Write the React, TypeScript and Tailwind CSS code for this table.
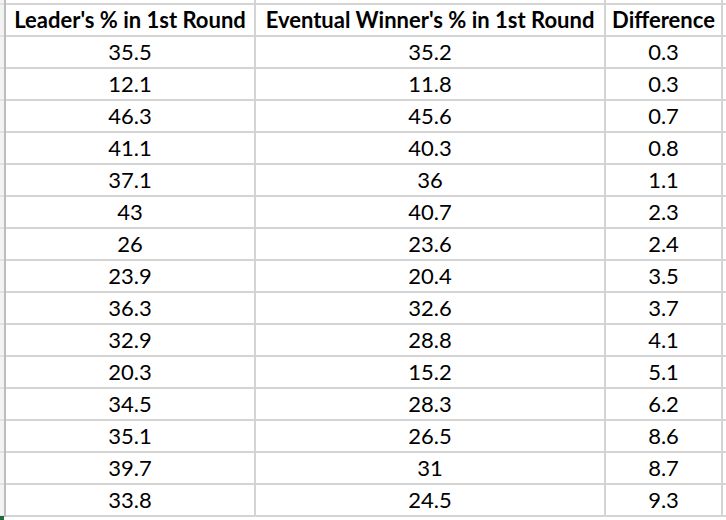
import React from "react";

const rows: [string, string, string][] = [
  ["35.5", "35.2", "0.3"],
  ["12.1", "11.8", "0.3"],
  ["46.3", "45.6", "0.7"],
  ["41.1", "40.3", "0.8"],
  ["37.1", "36", "1.1"],
  ["43", "40.7", "2.3"],
  ["26", "23.6", "2.4"],
  ["23.9", "20.4", "3.5"],
  ["36.3", "32.6", "3.7"],
  ["32.9", "28.8", "4.1"],
  ["20.3", "15.2", "5.1"],
  ["34.5", "28.3", "6.2"],
  ["35.1", "26.5", "8.6"],
  ["39.7", "31", "8.7"],
  ["33.8", "24.5", "9.3"],
];

function Row({ cells, bold, first }: { cells: string[]; bold?: boolean; first?: boolean }) {
  const h = first ? "h-[34px] border-t-2" : "h-[32px]";
  return (
    <div className="flex">
      <div className={`w-[4px] ${h} bg-[#f3f3f3] border-b-2 border-[#e2e2e2] shrink-0`} />
      <div className={`w-[2px] ${first ? "h-[34px]" : "h-[32px]"} bg-[#bdbdbd] shrink-0`} />
      {cells.map((c, i) => (
        <div
          key={i}
          className={`${h} ${i === 0 ? "w-[250px]" : i === 1 ? "w-[350px]" : "w-[117px]"} shrink-0 border-r-2 border-b-2 border-[#d4d4d4] flex items-center justify-center ${bold ? "font-bold" : ""}`}
        >
          {c}
        </div>
      ))}
      <div className={`flex-1 ${h} border-b-2 border-[#d4d4d4]`} />
    </div>
  );
}

export default function App() {
  return (
    <div
      className="w-[726px] h-[520px] bg-white relative overflow-hidden text-black text-[22px] leading-none"
      style={{ fontFamily: "Lato, 'Open Sans', sans-serif" }}
    >
      <div className="flex h-[3px]">
        <div className="w-[4px] bg-[#f3f3f3] shrink-0" />
        <div className="w-[2px] bg-[#bdbdbd] shrink-0" />
        <div className="w-[250px] border-r-2 border-[#d4d4d4] shrink-0" />
        <div className="w-[350px] border-r-2 border-[#d4d4d4] shrink-0" />
        <div className="w-[117px] border-r-2 border-[#d4d4d4] shrink-0" />
      </div>
      <Row cells={["Leader's % in 1st Round", "Eventual Winner's % in 1st Round", "Difference"]} bold first />
      {rows.map((r, i) => (
        <Row key={i} cells={r} />
      ))}
      <div className="absolute left-0 bottom-0 w-[4px] h-[4px] bg-[#1e6b3c]" />
    </div>
  );
}
